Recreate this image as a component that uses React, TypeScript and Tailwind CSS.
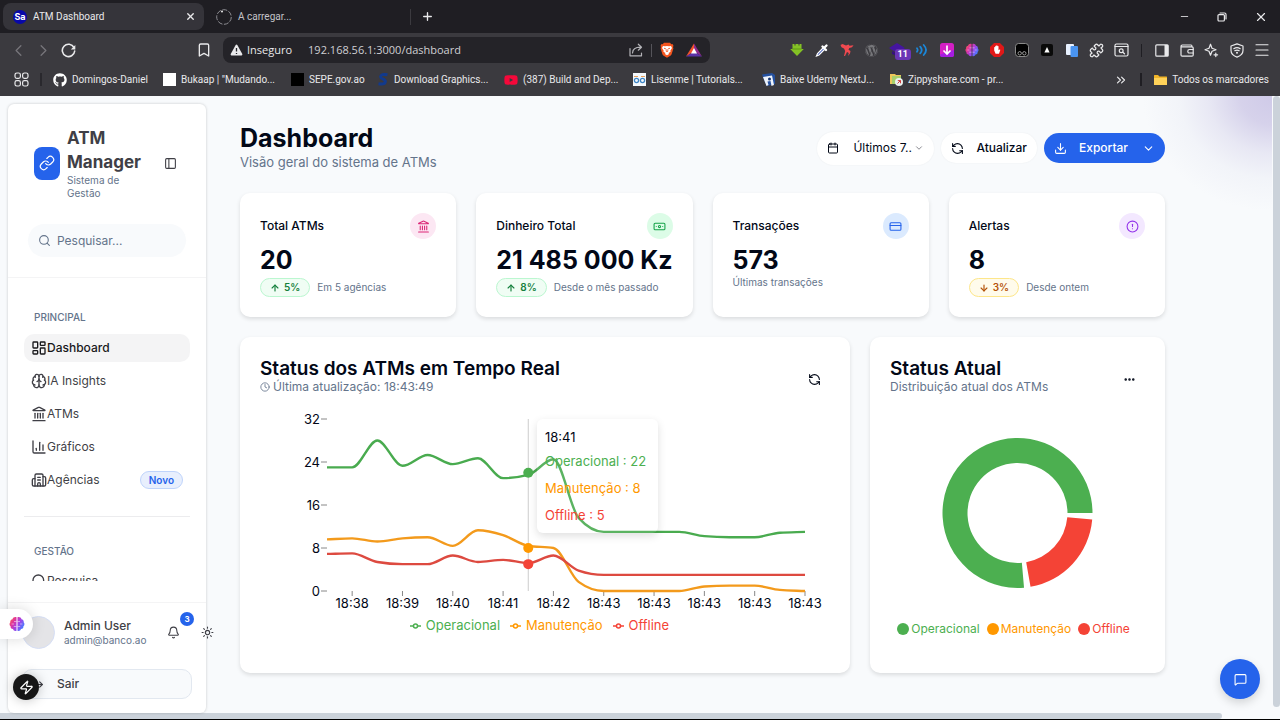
import type { ReactNode } from "react";
import {
  ArrowDown,
  ArrowUp,
  Banknote,
  Bell,
  Bookmark,
  Brain,
  Building2,
  Calendar,
  ChartColumn,
  ChevronDown,
  ChevronLeft,
  ChevronRight,
  ChevronsRight,
  CircleAlert,
  Clock,
  CreditCard,
  Download,
  Ellipsis,
  Landmark,
  LayoutDashboard,
  Link,
  LogOut,
  Menu,
  MessageSquare,
  Minus,
  PanelLeft,
  Plus,
  Puzzle,
  RefreshCcw,
  Search,
  Sun,
  X,
  Zap,
} from "lucide-react";
import { FaGithub, FaWordpress, FaYoutube } from "react-icons/fa";

/* ---------- Browser chrome ---------- */

function GradientBrain({ size, id }: { size: number; id: string }) {
  return (
    <svg width={size} height={size} viewBox="0 0 16 16">
      <defs>
        <linearGradient id={id} x1="0" y1="0" x2="1" y2="0.6">
          <stop offset="0" stopColor="#ff6a3d" />
          <stop offset="0.35" stopColor="#e0359b" />
          <stop offset="0.65" stopColor="#a343e8" />
          <stop offset="1" stopColor="#4a7bff" />
        </linearGradient>
      </defs>
      <path
        fill={`url(#${id})`}
        d="M7.500 1.200v13.600C6 15.400 4.400 14.600 4 13.100 2.300 13 1.300 11.700 1.600 10.300.3 9.500.2 7.300 1.300 6.300 1 4.500 2.100 3.300 3.500 3.200 3.800 1.300 6 .4 7.500 1.200zM8.500 1.200C10 .4 12.200 1.300 12.500 3.200c1.400.1 2.500 1.300 2.200 3.100 1.100 1 1 3.200-.3 4 .3 1.400-.7 2.700-2.400 2.800-.4 1.500-2 2.300-3.500 1.700z"
      />
      <path
        d="M7.500 5.500H5M7.500 10.500H4.800M2.600 8h2.400M8.500 5.500H11M8.500 10.500h2.700M13.400 8H11"
        stroke="#fff"
        strokeOpacity="0.6"
        strokeWidth="0.8"
        fill="none"
      />
    </svg>
  );
}

const stroke = {
  fill: "none",
  stroke: "currentColor",
  strokeWidth: 1.2,
  strokeLinecap: "round" as const,
  strokeLinejoin: "round" as const,
};

const extensions: { name: string; icon: ReactNode }[] = [
  {
    name: "Transferências",
    icon: (
      <svg width="14" height="14" viewBox="0 0 14 14">
        <path d="M2.500 1h2v1.500h1V1h3v1.500h1V1h2v5h2.300L7 13 .2 6h2.300z" fill="#84c225" />
        <path d="M2.500 5.500h9v1h-9z" fill="#5f9a13" />
      </svg>
    ),
  },
  {
    name: "Conta-gotas",
    icon: (
      <svg width="14" height="14" viewBox="0 0 14 14">
        <path d="M8 5 2.500 10.500 1.500 13l2.500-1L9.500 6.500" fill="#3d56b8" stroke="#fff" strokeWidth="1.200" />
        <path d="m7.500 3.500 3.500 3.500M9 5l2.500-2.500" stroke="#fff" strokeWidth="2.400" strokeLinecap="round" />
      </svg>
    ),
  },
  {
    name: "Pássaro",
    icon: (
      <svg width="14" height="14" viewBox="0 0 14 14">
        <path
          d="M.5 2 2.500 1l3.500 1.500L8.500 1.500l1 1.200 4-.4-1.500 2-2.700.8-.8 1.600 2 1.300-.5 2.500L8 13l.8-3L7 9l-2 4H4l1.200-5L4 5.500 1.500 4.300z"
          fill="#f0494f"
        />
      </svg>
    ),
  },
  { name: "WordPress", icon: <FaWordpress className="size-[13px] text-[#77777b]" /> },
  {
    name: "Academia",
    icon: (
      <span className="relative block">
        <svg width="16" height="14" viewBox="0 0 16 14">
          <path d="m8 0 8 5-8 5-8-5z" fill="#4515a0" />
          <path d="M3 8v3l5 2 5-2V8L8 11z" fill="#35107e" />
        </svg>
        <span className="absolute top-1.5 left-1.5 rounded-[3px] bg-[#6a35b5] px-[3px] text-[9px] leading-[11px] font-bold text-white">
          11
        </span>
      </span>
    ),
  },
  {
    name: "Som",
    icon: (
      <svg width="14" height="14" viewBox="0 0 14 14" className="text-[#1b87d8]">
        <path {...stroke} strokeWidth={1.8} d="M2 5.300q1.300 1.700 0 3.400M5.200 3.600q3 3.400 0 6.800M8.700 2q4.700 5 0 10" />
      </svg>
    ),
  },
  {
    name: "Baixar vídeo",
    icon: (
      <svg width="14" height="14" viewBox="0 0 14 14">
        <rect width="14" height="14" rx="2.500" fill="#d41fc4" />
        <path d="M0 11.500A2.500 2.500 0 0 0 2.500 14h9a2.500 2.500 0 0 0 2.500-2.500V7z" fill="#a51de0" />
        <path d="M7 2.500v8M3.500 7.500 7 11l3.500-3.500" stroke="#fff" strokeWidth="1.700" fill="none" />
      </svg>
    ),
  },
  { name: "Assistente", icon: <GradientBrain size={14} id="brain-toolbar" /> },
  {
    name: "Bloqueador",
    icon: (
      <svg width="14" height="14" viewBox="0 0 14 14">
        <path d="M4.100 0h5.800L14 4.100v5.800L9.900 14H4.100L0 9.900V4.100z" fill="#e01818" />
        <path
          d="M4.200 7.500V4.300q.5-.6 1 0V3.200q.5-.7 1.100 0v-.6q.6-.7 1.100 0v.7q.6-.6 1.100 0v4l1-.8q.8-.2.8.5L9 10.800H5.600z"
          fill="#fff"
        />
      </svg>
    ),
  },
  {
    name: "Scripts",
    icon: (
      <svg width="14" height="14" viewBox="0 0 14 14">
        <rect x=".5" y=".5" width="13" height="13" rx="3" fill="#000" stroke="#8a8a8a" />
        <circle cx="4.700" cy="10.300" r="1.700" fill="none" stroke="#bbb" strokeWidth=".8" />
        <circle cx="9.300" cy="10.300" r="1.700" fill="none" stroke="#bbb" strokeWidth=".8" />
      </svg>
    ),
  },
  {
    name: "Triângulo",
    icon: (
      <svg width="12" height="12" viewBox="0 0 12 12">
        <rect width="12" height="12" rx="2" fill="#0a0a0a" />
        <path d="m6 3 2.600 5.500H3.400z" fill="#fff" />
      </svg>
    ),
  },
  {
    name: "Páginas",
    icon: (
      <svg width="12" height="13" viewBox="0 0 12 13">
        <rect width="8" height="11" rx="1" fill="#e8f1ff" />
        <rect x="4.500" y="2" width="7.500" height="11" rx="1" fill="#4a94f0" />
      </svg>
    ),
  },
  { name: "Extensões", icon: <Puzzle className="size-[15px]" strokeWidth={2} /> },
  {
    name: "Procurar separadores",
    icon: (
      <svg width="15" height="14" viewBox="0 0 15 14">
        <rect {...stroke} x="1" y="1" width="13" height="12" rx="1.500" />
        <path {...stroke} d="M1 3.500h13M8.800 9.300l1.700 1.500" />
        <circle {...stroke} cx="7.200" cy="7.700" r="1.900" />
      </svg>
    ),
  },
];

const browserTools: { name: string; icon: ReactNode }[] = [
  {
    name: "Painel lateral",
    icon: (
      <svg width="14" height="13" viewBox="0 0 14 13">
        <rect {...stroke} x=".8" y=".8" width="12.400" height="11.400" rx="1" />
        <path d="M9.500 1H13v11H9.500z" fill="currentColor" />
      </svg>
    ),
  },
  {
    name: "Carteira",
    icon: (
      <svg width="14" height="13" viewBox="0 0 14 13">
        <path {...stroke} d="M1 2.800Q1 1 2.500 1H11q1 0 1 1.800M1 2.800h11q1.200 0 1.200 1.200v7q0 1.200-1.200 1.200H2.200Q1 12.200 1 11z" />
        <path {...stroke} d="M13.200 5.500H9.500q-1.700 0-1.700 1.800T9.500 9h3.700" />
      </svg>
    ),
  },
  {
    name: "Leo",
    icon: (
      <svg width="15" height="15" viewBox="0 0 15 15">
        <path {...stroke} d="M6.500 1.200 8 5.200l4 1.500-4 1.500-1.500 4-1.500-4-4-1.500 4-1.500zM11.800 10v3.600M10 11.800h3.600" />
      </svg>
    ),
  },
  {
    name: "VPN",
    icon: (
      <svg width="14" height="15" viewBox="0 0 14 15">
        <path {...stroke} d="M7 .9 13 3v4.500c0 3-2.500 5.300-6 6.600-3.500-1.300-6-3.600-6-6.600V3z" />
        <path {...stroke} d="M3.800 5.700q3.200-2 6.400 0M4.800 7.700q2.200-1.300 4.400 0" />
        <circle cx="7" cy="9.800" r="1" fill="currentColor" />
      </svg>
    ),
  },
  { name: "Menu", icon: <Menu className="size-[18px]" strokeWidth={1.5} /> },
];

const bookmarks: { label: string; width: string; icon: ReactNode }[] = [
  { label: "Domingos-Daniel", width: "w-[110px]", icon: <FaGithub className="size-[14px] text-white" /> },
  { label: 'Bukaap | "Mudando...', width: "w-[128px]", icon: <span className="size-[13px] bg-white" /> },
  { label: "SEPE.gov.ao", width: "w-[86px]", icon: <span className="size-[13px] bg-black" /> },
  {
    label: "Download Graphics...",
    width: "w-[127px]",
    icon: (
      <svg width="12" height="13" viewBox="0 0 12 13">
        <path
          d="M10.500 1.800Q4 .6 3.600 3.700C3.300 6.300 8.800 5.600 8.300 8.800 8 11.200 4.500 11.300 1.500 10.800"
          stroke="#123a8c"
          strokeWidth="3"
          fill="none"
        />
      </svg>
    ),
  },
  { label: "(387) Build and Dep...", width: "w-[129px]", icon: <FaYoutube className="size-[14px] text-[#f5083a]" /> },
  {
    label: "Lisenme | Tutorials...",
    width: "w-[129px]",
    icon: (
      <svg width="13" height="13" viewBox="0 0 13 13">
        <rect width="13" height="13" fill="#f4f8fc" />
        <path d="M1 3.500h4M8 3.500h4" stroke="#e8a15e" strokeWidth="1" />
        <circle cx="3.500" cy="7.500" r="2.100" fill="none" stroke="#3f86c6" strokeWidth="1.300" />
        <circle cx="9.500" cy="7.500" r="2.100" fill="none" stroke="#3f86c6" strokeWidth="1.300" />
      </svg>
    ),
  },
  {
    label: "Baixe Udemy NextJ...",
    width: "w-[128px]",
    icon: (
      <svg width="13" height="13" viewBox="0 0 13 13">
        <path d="M0 1.500 10 0l3 2v9l-8 2-3-6z" fill="#24509f" />
        <path d="m1 4 9-1.500L12 12l-2.500 1-1-5-3 .5L6.500 12l-2 1z" fill="#eef3fb" />
        <circle cx="7.500" cy="6" r="1.500" fill="#15326c" />
      </svg>
    ),
  },
  {
    label: "Zippyshare.com - pr...",
    width: "w-[130px]",
    icon: (
      <svg width="13" height="13" viewBox="0 0 13 13">
        <path d="M0 1h5l1 1h5v9H0z" fill="#efc75a" />
        <path d="M2 3h9v8H2z" fill="#a9cf6b" />
        <circle cx="9" cy="9" r="4" fill="#e9f1ee" />
        <path d="m7.500 10.500 3-3M7.800 7.600h2.700v2.700" stroke="#d23b3b" strokeWidth="1" fill="none" />
      </svg>
    ),
  },
];

function Browser() {
  return (
    <header className="shrink-0 bg-[#3b3a3f] font-['Roboto','Noto_Sans',sans-serif] text-[#e9e9eb]">
      <div className="flex h-[33px] items-center bg-[#1f1e23] text-[10px]">
        <div className="ml-[3px] flex h-[27px] w-[201px] items-center gap-1.5 rounded-lg bg-[#35343a] pr-2 pl-2.5">
          <span className="flex size-[14px] items-center justify-center rounded-full bg-[#0808a8] font-['Inter',sans-serif] text-[9px] font-bold text-white">
            Sa
          </span>
          <span className="flex-1">ATM Dashboard</span>
          <button type="button" aria-label="Fechar separador">
            <X className="size-[11px]" strokeWidth={3} />
          </button>
        </div>
        <div className="flex w-[207px] items-center gap-1.5 border-r border-[#3b3a3f] pl-3">
          <svg width="16" height="16" viewBox="0 0 16 16">
            <circle cx="8" cy="8" r="7.300" fill="none" stroke="#8d8d92" strokeWidth="1" strokeDasharray="5 1.500" />
            <circle cx="6" cy="2.500" r="1" fill="#e9e9eb" />
          </svg>
          <span className="text-[#c3c3c7]">A carregar...</span>
        </div>
        <button type="button" aria-label="Novo separador" className="ml-2.5">
          <Plus className="size-[13px]" strokeWidth={2.5} />
        </button>
        <div className="ml-auto flex items-center gap-[27px] pr-3">
          <button type="button" aria-label="Minimizar">
            <Minus className="size-[11px]" strokeWidth={1.8} />
          </button>
          <button type="button" aria-label="Restaurar">
            <svg width="10" height="10" viewBox="0 0 10 10">
              <rect {...stroke} x="1" y="2.600" width="6.400" height="6.400" rx="1" />
              <path {...stroke} d="M3 1h4.500Q9 1 9 2.500V7" />
            </svg>
          </button>
          <button type="button" aria-label="Fechar">
            <X className="size-[14px]" strokeWidth={2} />
          </button>
        </div>
      </div>

      <div className="flex h-[34px] items-center pr-1.5 pl-1.5">
        <button type="button" aria-label="Recuar" className="flex w-[25px] justify-center text-[#77767b]">
          <ChevronLeft className="size-[19px]" strokeWidth={1.6} />
        </button>
        <button type="button" aria-label="Avançar" className="flex w-[25px] justify-center text-[#77767b]">
          <ChevronRight className="size-[19px]" strokeWidth={1.6} />
        </button>
        <button type="button" aria-label="Recarregar" className="flex w-[25px] justify-center">
          <svg width="15" height="15" viewBox="0 0 15 15">
            <path {...stroke} strokeWidth={1.6} d="M13 4.500A6.200 6.200 0 1 0 13.700 8" />
            <path d="M14.300 2v4.500H9.800z" fill="currentColor" />
          </svg>
        </button>
        <button type="button" aria-label="Marcador" className="ml-[115px] flex w-4 justify-center">
          <Bookmark className="size-[16px]" strokeWidth={2} />
        </button>
        <div className="ml-[11px] flex h-[26px] w-[487px] items-center rounded-lg bg-[#242328] pr-2 pl-[7px] font-['Open_Sans','Noto_Sans',sans-serif] text-[11px]">
          <svg width="13" height="12" viewBox="0 0 13 12">
            <path d="M6.500.5q.5 0 .8.500l5 9q.3 1.200-.7 1.500H1.400q-1-.3-.7-1.500l5-9q.3-.5.8-.5" fill="#e9e9eb" />
            <path d="M6.500 4v3.500M6.500 9v1" stroke="#242328" strokeWidth="1.300" />
          </svg>
          <span className="ml-1">Inseguro</span>
          <input
            aria-label="Endereço"
            defaultValue="192.168.56.1:3000/dashboard"
            className="ml-4 min-w-0 flex-1 bg-transparent text-[11px] text-[#cfcfd3] outline-none"
          />
          <button type="button" aria-label="Partilhar" className="mr-2">
            <svg width="14" height="14" viewBox="0 0 14 14" className="text-[#b4b4b8]">
              <path {...stroke} d="M1 5.500v7.300h11.500V10M3.500 10q.3-5.700 8-5.800M9.300 1.200l3.200 3-3.200 3" />
            </svg>
          </button>
          <span className="mr-2 h-[13px] w-px bg-[#55545a]" />
          <button type="button" aria-label="Brave Shields" className="mr-3">
            <svg width="14" height="16" viewBox="0 0 14 16">
              <path
                d="M4 .8h6l1.300 1.400 1.200-.1 1 1.600-.5 1.300.4 1.500-1.800 5.800q-.3.900-1.200 1.500L7 15.800l-3.400-2Q2.700 13.200 2.400 12.300L.6 6.500 1 5 .5 3.700l1-1.600 1.200.1z"
                fill="#f4551e"
              />
              <path
                d="m3 4 2 .3L7 4l2 .3L11 4l1 2-1.700 2.700.3 1L8.500 11l.6.900L7 13.300 4.900 11.900l.6-.9-2.100-1.300.3-1L2 6z"
                fill="#fff"
              />
              <path d="M4 6.200 6 7M10 6.200 8 7M7 7v2.300M5.700 8.800 7 9.600l1.300-.8" stroke="#f4551e" strokeWidth=".9" fill="none" />
            </svg>
          </button>
          <button type="button" aria-label="Recompensas">
            <svg width="16" height="14" viewBox="0 0 16 14">
              <path d="M8 .5v8L0 13.500z" fill="#f4522d" />
              <path d="M8 .5v8l8 5z" fill="#8c2a8c" />
              <path d="M0 13.500h16l-8-5z" fill="#5b32a8" />
              <path d="m8 5 3 5.500H5z" fill="#fff" />
            </svg>
          </button>
        </div>
        <div className="ml-auto flex items-center">
          {extensions.map((item) => (
            <button key={item.name} type="button" aria-label={item.name} className="flex w-[25px] justify-center">
              {item.icon}
            </button>
          ))}
          <span className="mx-[7px] h-[13px] w-px bg-[#1f1e23]" />
          {browserTools.map((item) => (
            <button key={item.name} type="button" aria-label={item.name} className="flex w-[25px] justify-center">
              {item.icon}
            </button>
          ))}
        </div>
      </div>

      <nav aria-label="Marcadores" className="flex h-[29px] items-center pb-1 pl-[14px] text-[10px]">
        <svg width="15" height="15" viewBox="0 0 15 15">
          {[1, 8.6].map((x) =>
            [1, 8.6].map((y) => <rect key={`${x}-${y}`} {...stroke} x={x} y={y} width="5.400" height="5.400" rx="1.800" />),
          )}
        </svg>
        <span className="mr-[11px] ml-[11px] h-[13px] w-0.5 bg-[#29282d]" />
        {bookmarks.map((item) => (
          <a key={item.label} href="#marcador" className={`flex shrink-0 items-center gap-[5px] whitespace-nowrap ${item.width}`}>
            {item.icon}
            {item.label}
          </a>
        ))}
        <div className="ml-auto flex items-center pr-[11px]">
          <ChevronsRight className="size-[14px]" strokeWidth={2} />
          <span className="mr-3 ml-3 h-[13px] w-0.5 bg-[#1f1e23]" />
          <a href="#todos" className="flex items-center gap-[5px] whitespace-nowrap">
            <svg width="13" height="12" viewBox="0 0 13 12">
              <path d="M0 1.500Q0 1 .5 1H4l1.500 1.500H12.500q.5 0 .5.500v7.500q0 .5-.5.500H.5q-.5 0-.5-.5z" fill="#f0b429" />
              <path d="M0 4h13v6.500q0 .5-.5.500H.5q-.5 0-.5-.5z" fill="#ffd259" />
            </svg>
            Todos os marcadores
          </a>
        </div>
      </nav>
    </header>
  );
}

/* ---------- Sidebar ---------- */

const mainLinks = [
  { label: "Dashboard", Icon: LayoutDashboard, active: true },
  { label: "IA Insights", Icon: Brain },
  { label: "ATMs", Icon: Landmark },
  { label: "Gráficos", Icon: ChartColumn },
  { label: "Agências", Icon: Building2, badge: "Novo" },
];

function Sidebar() {
  return (
    <aside className="relative mt-2 ml-2 flex w-[198px] shrink-0 flex-col rounded-md bg-white text-[#3f3f46] shadow-[0_0_3px_rgba(0,0,0,0.2)]">
      <div className="flex items-center pt-[22px] pl-[26px]">
        <span className="flex h-[33px] w-[26px] shrink-0 items-center justify-center rounded-lg bg-[#2563eb] text-white">
          <Link className="size-4" strokeWidth={1.8} />
        </span>
        <div className="ml-[7px] w-[87px]">
          <p className="text-[17px] leading-6 font-bold">ATM Manager</p>
          <p className="w-16 text-[10px] leading-[13px] text-[#64748b]">Sistema de Gestão</p>
        </div>
        <button type="button" aria-label="Recolher menu" className="ml-2.5">
          <PanelLeft className="size-[13px]" strokeWidth={2} />
        </button>
      </div>

      <label className="mx-5 mt-6 flex h-[33px] items-center gap-1.5 rounded-full bg-[#f8fafc] px-2.5 text-[#64748b]">
        <Search className="size-[13px] shrink-0" strokeWidth={2} />
        <input
          type="search"
          aria-label="Pesquisar"
          placeholder="Pesquisar..."
          className="w-full min-w-0 bg-transparent text-[12px] outline-none placeholder:text-[#64748b]"
        />
      </label>

      <nav aria-label="Principal" className="mt-5 min-h-0 flex-1 overflow-hidden border-t border-[#f4f4f5] px-4 pt-[29px]">
        <h2 className="px-2.5 text-[10px] leading-5 font-medium text-[#64748b]">PRINCIPAL</h2>
        <ul className="mt-[7px] flex flex-col gap-[5px]">
          {mainLinks.map(({ label, Icon, active, badge }) => (
            <li key={label}>
              <a
                href="#pagina"
                className={
                  active
                    ? "flex h-7 items-center rounded-[10px] bg-[#f4f4f5] px-[7px] text-[12px] font-medium text-[#18181b]"
                    : "flex h-7 items-center rounded-[10px] px-[7px] text-[12px]"
                }
              >
                <Icon className="size-4 shrink-0" strokeWidth={2} />
                {label}
                {badge && (
                  <span className="ml-auto rounded-full border border-[#bfd4fb] bg-[#e8effd] px-2 text-[10px] leading-4 font-semibold text-[#2563eb]">
                    {badge}
                  </span>
                )}
              </a>
            </li>
          ))}
        </ul>
        <hr className="mt-[22px] border-[#ececee]" />
        <h2 className="mt-6 px-2.5 text-[10px] leading-5 font-medium text-[#64748b]">GESTÃO</h2>
        <div className="mt-1.5 h-[14px] overflow-hidden">
          <a href="#pesquisa" className="flex h-7 items-center px-[7px] text-[12px]">
            <Search className="size-4 shrink-0" strokeWidth={2} />
            Pesquisa
          </a>
        </div>
      </nav>

      <div className="border-t border-[#f4f4f5] px-[14px] pt-[13px] pb-[14px]">
        <div className="flex items-center">
          <span className="size-[33px] shrink-0 rounded-full border border-[#d5def5] bg-[#e4e4e7]" />
          <div className="ml-[9px] w-[100px] shrink-0 whitespace-nowrap">
            <p className="text-[12px] leading-4 font-medium">Admin User</p>
            <p className="text-[10px] leading-[13px] text-[#64748b]">admin@banco.ao</p>
          </div>
          <button type="button" aria-label="Notificações" className="relative ml-[3px] shrink-0">
            <Bell className="size-[13px]" strokeWidth={2} />
            <span className="absolute -top-3.5 left-[13px] flex size-[14px] items-center justify-center rounded-full bg-[#2563eb] text-[8px] font-bold text-white">
              3
            </span>
          </button>
          <button type="button" aria-label="Tema" className="ml-[21px] shrink-0">
            <Sun className="size-[13px]" strokeWidth={2} />
          </button>
        </div>
        <button
          type="button"
          className="mt-5 flex h-[30px] w-full items-center gap-[13px] rounded-[10px] border border-[#e2e8f0] bg-[#f8fafc] pl-2 text-[12px] font-medium"
        >
          <LogOut className="size-[13px]" strokeWidth={2} />
          Sair
        </button>
      </div>
    </aside>
  );
}

/* ---------- Stat cards ---------- */

const stats = [
  {
    title: "Total ATMs",
    value: "20",
    Icon: Landmark,
    tone: "bg-[#fce7f3] text-[#db2777]",
    trend: "5%",
    TrendIcon: ArrowUp,
    trendTone: "border-[#bbf7d0] bg-[#f0fdf4] text-[#15803d]",
    note: "Em 5 agências",
  },
  {
    title: "Dinheiro Total",
    value: "21 485 000 Kz",
    Icon: Banknote,
    tone: "bg-[#dcfce7] text-[#16a34a]",
    trend: "8%",
    TrendIcon: ArrowUp,
    trendTone: "border-[#bbf7d0] bg-[#f0fdf4] text-[#15803d]",
    note: "Desde o mês passado",
  },
  {
    title: "Transações",
    value: "573",
    Icon: CreditCard,
    tone: "bg-[#dbeafe] text-[#2563eb]",
    note: "Últimas transações",
  },
  {
    title: "Alertas",
    value: "8",
    Icon: CircleAlert,
    tone: "bg-[#f3e8ff] text-[#9333ea]",
    trend: "3%",
    TrendIcon: ArrowDown,
    trendTone: "border-[#fde68a] bg-[#fffbeb] text-[#b45309]",
    note: "Desde ontem",
  },
];

const cardClass = "rounded-[10px] bg-white shadow-[0_2px_4px_rgba(0,0,0,0.12)]";

function StatCards() {
  return (
    <section aria-label="Indicadores" className="grid grid-cols-4 gap-5">
      {stats.map(({ title, value, Icon, tone, trend, TrendIcon, trendTone, note }) => (
        <article key={title} className={`p-5 ${cardClass}`}>
          <div className="flex items-center justify-between">
            <h2 className="text-[12px] font-medium">{title}</h2>
            <span className={`flex size-[26px] items-center justify-center rounded-full ${tone}`}>
              <Icon className="size-[13px]" strokeWidth={2} />
            </span>
          </div>
          <p className="mt-[7px] text-[25px] leading-[29px] font-bold whitespace-nowrap">{value}</p>
          {trend && TrendIcon ? (
            <div className="mt-[3px] flex items-center gap-[7px]">
              <span
                className={`flex h-[19px] items-center gap-1 rounded-full border px-[9px] text-[10px] font-semibold ${trendTone}`}
              >
                <TrendIcon className="size-[10px]" strokeWidth={2.8} />
                {trend}
              </span>
              <span className="text-[10px] text-[#64748b]">{note}</span>
            </div>
          ) : (
            <p className="text-[10px] leading-[14px] text-[#64748b]">{note}</p>
          )}
        </article>
      ))}
    </section>
  );
}

/* ---------- Line chart ---------- */

const GREEN = "#4caf50";
const ORANGE = "#ff9800";
const RED = "#f44336";

const series = [
  {
    name: "Operacional",
    color: GREEN,
    line: "#49ab4f",
    text: "text-[#4caf50]",
    current: 22,
    values: [23, 23, 28, 23.3, 25.3, 23.6, 24.7, 21, 21.6, 24.5, 13.6, 11, 11, 11, 11, 10.2, 10, 10, 10.85, 11],
  },
  {
    name: "Manutenção",
    color: ORANGE,
    line: "#f39a1c",
    text: "text-[#ff9800]",
    current: 8,
    values: [9.6, 9.8, 9.2, 9.8, 10, 8.4, 11.3, 10.4, 8.4, 8, 1.7, 0, 0, 0, 0, 0.85, 1, 1, 0.2, 0],
  },
  {
    name: "Offline",
    color: RED,
    line: "#dd4a40",
    text: "text-[#f44336]",
    current: 5,
    values: [6.9, 7, 5.4, 5, 5, 6.6, 5.4, 5.8, 5.2, 6.6, 3.8, 3, 3, 3, 3, 3, 3, 3, 3, 3],
  },
];

const timeLabels = ["18:38", "18:39", "18:40", "18:41", "18:42", "18:43", "18:43", "18:43", "18:43", "18:43"];

const PLOT = { left: 67, right: 545, top: 14, bottom: 186 };
const STEP = (PLOT.right - PLOT.left) / 19;
const xAt = (index: number) => PLOT.left + index * STEP;
const yAt = (value: number) => PLOT.bottom - (value / 32) * (PLOT.bottom - PLOT.top);

// Cubic path whose tangents never overshoot the neighbouring values.
function monotonePath(values: number[]) {
  const ys = values.map(yAt);
  const slopes = ys.slice(1).map((y, i) => (y - ys[i]) / STEP);
  const tangents = ys.map((_, i) => {
    if (i === 0) return slopes[0];
    if (i === ys.length - 1) return slopes[i - 1];
    const a = slopes[i - 1];
    const b = slopes[i];
    if (a * b <= 0) return 0;
    return Math.sign(a) * Math.min(Math.abs(a), Math.abs(b), Math.abs(a + b) / 4) * 2;
  });
  return ys.reduce((path, y, i) => {
    if (i === 0) return `M${xAt(0)},${y}`;
    const third = STEP / 3;
    return `${path}C${xAt(i - 1) + third},${ys[i - 1] + tangents[i - 1] * third} ${xAt(i) - third},${y - tangents[i] * third} ${xAt(i)},${y}`;
  }, "");
}

function LineChartCard() {
  return (
    <section className={`col-span-2 px-5 pt-5 pb-[34px] ${cardClass}`}>
      <div className="flex items-start justify-between">
        <div>
          <h2 className="text-[19px] leading-[23px] font-semibold">Status dos ATMs em Tempo Real</h2>
          <p className="flex items-center gap-[3px] text-[12px] leading-[14px] text-[#64748b]">
            <Clock className="size-[10px]" strokeWidth={2} />
            Última atualização: 18:43:49
          </p>
        </div>
        <button type="button" aria-label="Atualizar gráfico" className="mt-1.5 flex size-8 items-center justify-center">
          <RefreshCcw className="size-[13px]" strokeWidth={2} />
        </button>
      </div>
      <div className="relative mt-2.5">
        <svg viewBox="0 0 570 208" className="block w-full font-['Inter',sans-serif] text-[13px]">
          <line x1={xAt(8)} x2={xAt(8)} y1={PLOT.top} y2={PLOT.bottom} stroke="#ccc" />
          {[0, 8, 16, 24, 32].map((value) => (
            <g key={value}>
              <line x1={PLOT.left - 6} x2={PLOT.left} y1={yAt(value)} y2={yAt(value)} stroke="#888" />
              <text x={PLOT.left - 7} y={yAt(value) + 5} textAnchor="end" fill="#020817">
                {value}
              </text>
            </g>
          ))}
          {timeLabels.map((label, i) => (
            <g key={i}>
              <line x1={xAt(i * 2 + 1)} x2={xAt(i * 2 + 1)} y1={PLOT.bottom} y2={PLOT.bottom + 5} stroke="#888" />
              <text x={xAt(i * 2 + 1)} y={PLOT.bottom + 17} textAnchor="middle" fill="#020817">
                {label}
              </text>
            </g>
          ))}
          {series.map((item) => (
            <g key={item.name}>
              <path d={monotonePath(item.values)} fill="none" stroke={item.line} strokeWidth="2.400" />
              <circle cx={xAt(8)} cy={yAt(item.current)} r="5" fill={item.color} />
            </g>
          ))}
        </svg>
        <div className="absolute top-[14px] left-[277px] w-[121px] rounded-md bg-white/10 py-2 pl-2 text-[13px] leading-5 shadow-[0_3px_8px_rgba(0,0,0,0.13)]">
          <p className="mb-1">18:41</p>
          <ul className="flex flex-col gap-[7px]">
            {series.map((item) => (
              <li key={item.name} className={item.text}>
                {item.name} : {item.current}
              </li>
            ))}
          </ul>
        </div>
      </div>
      <ul className="flex h-[26px] items-center justify-center gap-[9px] pr-3 text-[13px]">
        {series.map((item) => (
          <li key={item.name} className={`flex items-center gap-1 ${item.text}`}>
            <svg width="13" height="8" viewBox="0 0 13 8">
              <path d="M1 4h11" stroke={item.color} strokeWidth="1.500" />
              <circle cx="6.500" cy="4" r="2" fill="#fff" stroke={item.color} strokeWidth="1.500" />
            </svg>
            {item.name}
          </li>
        ))}
      </ul>
    </section>
  );
}

/* ---------- Donut chart ---------- */

function ringSlice(from: number, to: number) {
  const point = (radius: number, angle: number) => {
    const rad = (angle * Math.PI) / 180;
    return `${127.5 + radius * Math.cos(rad)},${108 - radius * Math.sin(rad)}`;
  };
  const large = to - from > 180 ? 1 : 0;
  return `M${point(75, from)}A75,75 0 ${large} 0 ${point(75, to)}L${point(50, to)}A50,50 0 ${large} 1 ${point(50, from)}Z`;
}

function DonutCard() {
  return (
    <section className={`px-5 pt-5 ${cardClass}`}>
      <div className="flex items-start justify-between">
        <div>
          <h2 className="text-[19px] leading-[23px] font-semibold">Status Atual</h2>
          <p className="text-[12px] leading-[14px] text-[#64748b]">Distribuição atual dos ATMs</p>
        </div>
        <button type="button" aria-label="Mais opções" className="mt-1.5 flex size-8 items-center justify-center">
          <Ellipsis className="size-[13px]" strokeWidth={2.6} />
        </button>
      </div>
      <svg viewBox="0 0 255 208" className="mt-2.5 block w-full">
        <path d={ringSlice(0, 275)} fill={GREEN} />
        <path d={ringSlice(280, 355)} fill={RED} />
      </svg>
      <ul className="flex h-8 items-center justify-center gap-[7px] pr-2 text-[12px]">
        {series.map((item) => (
          <li key={item.name} className={`flex items-center gap-0.5 ${item.text}`}>
            <svg width="12" height="12" viewBox="0 0 12 12">
              <circle cx="6" cy="6" r="6" fill={item.color} />
            </svg>
            {item.name}
          </li>
        ))}
      </ul>
    </section>
  );
}

/* ---------- Page ---------- */

function PageHeader() {
  return (
    <div className="mb-[21px] flex h-12 items-center justify-between">
      <div>
        <h1 className="text-[25px] leading-[29px] font-bold">Dashboard</h1>
        <p className="text-[13px] leading-[19px] text-[#64748b]">Visão geral do sistema de ATMs</p>
      </div>
      <div className="flex items-center gap-[7px] text-[12px] font-medium">
        <label className="flex h-[33px] w-[117px] items-center rounded-full bg-white pr-2.5 pl-2.5 shadow-[0_0_2px_rgba(0,0,0,0.06)]">
          <Calendar className="size-3 shrink-0" strokeWidth={2} />
          <select
            aria-label="Período"
            className="ml-[14px] min-w-0 flex-1 appearance-none bg-transparent font-normal whitespace-nowrap outline-none"
          >
            <option>Últimos 7..</option>
          </select>
          <ChevronDown className="size-[10px] shrink-0 text-[#71717a]" strokeWidth={2} />
        </label>
        <button
          type="button"
          className="flex h-[30px] items-center gap-3 rounded-full bg-white px-2.5 shadow-[0_0_2px_rgba(0,0,0,0.06)]"
        >
          <RefreshCcw className="size-[13px]" strokeWidth={2} />
          Atualizar
        </button>
        <button type="button" className="flex h-[30px] items-center rounded-full bg-[#2563eb] px-2.5 text-white">
          <Download className="size-[13px]" strokeWidth={2} />
          <span className="mr-[14px] ml-3">Exportar</span>
          <ChevronDown className="size-[13px]" strokeWidth={2} />
        </button>
      </div>
    </div>
  );
}

export default function App() {
  return (
    <div className="flex h-screen min-w-[1100px] flex-col overflow-hidden bg-[#f8fafc] font-['Inter',sans-serif] text-[#020817]">
      <Browser />
      <div className="relative flex min-h-0 flex-1">
        <div className="pointer-events-none absolute top-0 right-[7px] h-[120px] w-[130px] bg-[radial-gradient(ellipse_130px_115px_at_100%_0%,#cfcae8_0%,#d6d2eb_25%,#e8e8f4_50%,#f2f4f9_72%,transparent_100%)]" />
        <Sidebar />
        <main className="relative min-w-0 flex-1 pt-7 pr-[107px] pl-[34px]">
          <PageHeader />
          <StatCards />
          <div className="mt-5 grid grid-cols-3 gap-5">
            <LineChartCard />
            <DonutCard />
          </div>
        </main>
        <div className="relative flex w-2 shrink-0 bg-[#f8fafc] pb-1.5 pl-px">
          <div className="flex-1 rounded-full bg-[#cbd2da]" />
        </div>
        <button
          type="button"
          aria-label="Abrir chat"
          className="absolute right-5 bottom-[14px] flex size-10 items-center justify-center rounded-full bg-[#2563eb] text-white shadow-[0_4px_10px_rgba(0,0,0,0.15)]"
        >
          <MessageSquare className="size-[13px]" strokeWidth={2} />
        </button>
        <button
          type="button"
          aria-label="Assistente"
          className="absolute bottom-[74px] left-0 flex h-[30px] w-[33px] items-center justify-center rounded-r-full bg-white shadow-[0_0_14px_rgba(0,0,0,0.15)]"
        >
          <GradientBrain size={16} id="brain-page" />
        </button>
        <button
          type="button"
          aria-label="Ferramentas de desenvolvimento"
          className="absolute bottom-[13px] left-[13px] flex size-[26px] items-center justify-center rounded-full bg-[#161616] text-white shadow-[0_0_12px_rgba(0,0,0,0.25)]"
        >
          <Zap className="size-[15px]" strokeWidth={2} />
        </button>
      </div>
      <div className="h-[7px] shrink-0 border-b border-black bg-[#f8fafc] pr-[58px]">
        <div className="h-full rounded-r-full bg-[#cbd2da]" />
      </div>
    </div>
  );
}
